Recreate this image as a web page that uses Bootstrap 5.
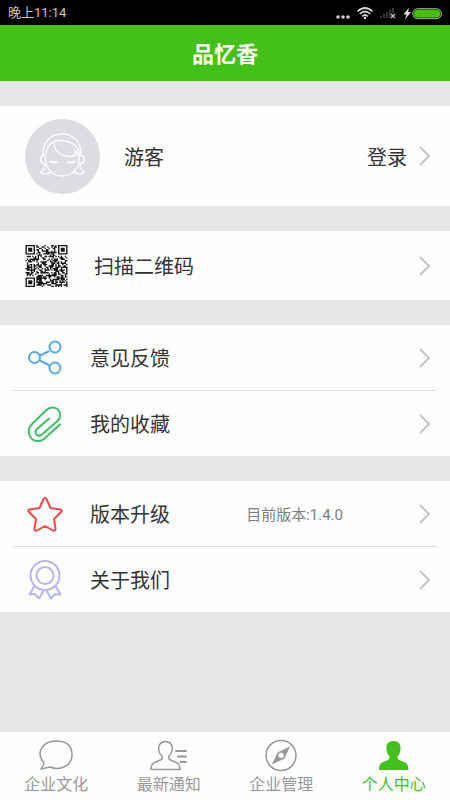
<!DOCTYPE html>
<html lang="zh-CN">
<head>
<meta charset="utf-8">
<meta name="viewport" content="width=device-width, initial-scale=1">
<title>品忆香</title>
<link href="https://cdn.jsdelivr.net/npm/bootstrap@5.3.0/dist/css/bootstrap.min.css" rel="stylesheet">
<style>
  body { font-family: Roboto, "Noto Sans CJK SC", sans-serif; background: #e7e6e8; color: #333; }
  svg { display: block; flex: none; }
  .status-bar { height: 25px; background: #000; color: #c8c8c8; font-size: 13px; line-height: 25px; }
  .title-bar { height: 56px; background: #44c01b; color: #fff; }
  .title-bar h1 { font-size: 22px; line-height: 32px; font-weight: 700; padding-top: 4px; }
  .groups { gap: 25px; padding: 25px 0; }
  .group { background: #fefefe; }
  .entry { height: 65px; padding: 0 18px 0 25px; font-size: 20px; line-height: 30px; color: #333; text-decoration: none; }
  .entry span { padding-top: 3px; }
  .entry-profile { height: 100px; }
  .entry-scan { height: 69px; }
  .entry .symbol { width: 40px; margin-right: 25px; }
  .entry .picture { margin-right: 26px; }
  .login { margin-right: 11px; }
  .divider { height: 1px; margin: 0 13px; background: #dedee0; }
  .version { font-size: 15px; color: #7d7d7d; margin-right: 75px; }
  .chevron { fill: none; stroke: #c3c3c6; stroke-width: 2; }
  .tab-bar { background: #fefefe; height: 68px; }
  .tab { color: #98989c; font-size: 16px; line-height: 26px; text-decoration: none; padding-top: 7px; }
  .tab.current { color: #44c01b; }
</style>
<script src="https://cdn.jsdelivr.net/npm/bootstrap@5.3.0/dist/js/bootstrap.bundle.min.js"></script>
</head>
<body>
<svg class="d-none" aria-hidden="true"><symbol id="chevron" viewBox="0 0 14 20"><path d="M2 1 11 10 2 19"/></symbol></svg>
<div class="d-flex flex-column min-vh-100">
  <div class="status-bar d-flex justify-content-between align-items-center px-2">
    <span>晚上11:14</span>
    <svg width="108" height="24" viewBox="0 0 108 24" aria-hidden="true">
      <g fill="#d0d0d0"><circle cx="4" cy="16" r="1.800"/><circle cx="9" cy="16" r="1.800"/><circle cx="14" cy="16" r="1.800"/></g>
      <g fill="none" stroke="#d4d4d4" stroke-width="1.700"><path d="M23.500 10.500Q31 3.500 38.500 10.500M25.800 13Q31 8 36.200 13M28.200 15.400Q31 12.600 33.800 15.400"/></g>
      <circle cx="31" cy="17" r="1.300" fill="#d4d4d4"/>
      <path d="M47 17v-2M50 17v-4M53 17v-6M56 17v-8M59 12V7" stroke="#383838" stroke-width="2"/>
      <path d="m57 13 4 4m0-4-4 4" stroke="#c8c8c8" stroke-width="1.200"/>
      <path d="m75 6.500-5.500 7h3L71 18.500l6-7.500h-3Z" fill="#ddd"/>
      <rect x="78.700" y="7.700" width="28.800" height="10" rx="5" fill="#174805" stroke="#a5b69c"/>
      <rect x="80" y="9" width="26.200" height="7.500" rx="3.700" fill="#48c010"/>
    </svg>
  </div>
  <header class="title-bar d-flex align-items-center justify-content-center"><h1 class="m-0">品忆香</h1></header>

  <main class="groups d-flex flex-column flex-grow-1">
    <section class="group">
      <a class="entry entry-profile d-flex align-items-center" href="#login">
        <svg class="symbol-face me-4" width="75" height="75" viewBox="0 0 75 75" aria-hidden="true">
          <circle cx="37.500" cy="37.500" r="37.500" fill="#dddce0"/>
          <g fill="none" stroke="#fafafb" stroke-width="1.500" stroke-linecap="round" stroke-linejoin="round">
            <path d="M18 37C17 23 26 15 37 15S57 23 56 37"/>
            <path d="M22 30C17 44 24 57 37.500 57S57 44 53 30"/>
            <path d="M22 30Q25 22 34 21.500Q47 21 53 30"/>
            <path d="M29 23Q29 34 39 36.500Q46 38.500 52 36Q49 34 50 31.500L54 35"/>
            <path d="M19 36Q15 37 16 42Q17 45 20 45Q20 51 15.500 53Q19 57 26 53M55 36Q60 37 59 42Q58 45 55 45Q55 51 59.500 53Q56 57 49 53"/>
            <path d="M25 42.500Q28 44 32 43M43 43Q47 44 50 42.500" stroke-width="2"/>
          </g>
        </svg>
        <span class="me-auto">游客</span>
        <span class="login">登录</span>
        <svg class="chevron" width="14" height="20"><use href="#chevron"/></svg>
      </a>
    </section>

    <section class="group">
      <a class="entry entry-scan d-flex align-items-center" href="#scan">
        <svg id="qr" class="picture" width="43" height="42" viewBox="0 0 31 31" aria-hidden="true"><path fill="#151515"/></svg>
        <span class="me-auto">扫描二维码</span>
        <svg class="chevron" width="14" height="20"><use href="#chevron"/></svg>
      </a>
    </section>

    <section class="group">
      <a class="entry d-flex align-items-center" href="#feedback">
        <svg class="symbol" width="40" height="40" viewBox="0 0 40 40" fill="none" stroke="#58aae8" stroke-width="2" aria-hidden="true">
          <path d="m15 17.500 9.500-4.500M15 22.500l9.500 5"/><circle cx="9.500" cy="19.500" r="5.500"/><circle cx="30" cy="9" r="5.500"/><circle cx="30" cy="30" r="5.500"/>
        </svg>
        <span class="me-auto">意见反馈</span>
        <svg class="chevron" width="14" height="20"><use href="#chevron"/></svg>
      </a>
      <div class="divider"></div>
      <a class="entry d-flex align-items-center" href="#favorites">
        <svg class="symbol" width="40" height="40" viewBox="0 0 40 40" fill="none" stroke="#3fbd69" stroke-width="2" stroke-linecap="round" stroke-linejoin="round" aria-hidden="true">
          <path d="M24 14.500 12.500 24.500C7.500 29 13 34 17.500 30L32.500 17C40 10 31 -1 22 5.500L7.500 19.500C0 27 5 37 13 37Q17 37 19 35L35 20.500"/>
        </svg>
        <span class="me-auto">我的收藏</span>
        <svg class="chevron" width="14" height="20"><use href="#chevron"/></svg>
      </a>
    </section>

    <section class="group">
      <a class="entry d-flex align-items-center" href="#upgrade">
        <svg class="symbol" width="40" height="40" viewBox="0 0 40 40" fill="none" stroke="#e84b4b" stroke-width="2" stroke-linejoin="round" aria-hidden="true">
          <path d="M18.500 5Q20 3 21.500 5L25.500 14 35 15.500Q38 16 36 18L29 25 30.500 34.500Q30.500 37.500 28 36.500L20 32 12 36.500Q9.500 37.500 9.500 34.500L11 25 4 18Q2 16 5 15.500L14.500 14Z"/>
        </svg>
        <span class="me-auto">版本升级</span>
        <span class="version">目前版本:1.4.0</span>
        <svg class="chevron" width="14" height="20"><use href="#chevron"/></svg>
      </a>
      <div class="divider"></div>
      <a class="entry d-flex align-items-center" href="#about">
        <svg class="symbol" width="40" height="40" viewBox="0 0 40 40" fill="none" stroke="#b9b6ee" stroke-width="2" stroke-linejoin="round" aria-hidden="true">
          <circle cx="20" cy="15.500" r="14.500"/><circle cx="20" cy="15.500" r="8.500"/>
          <path d="M9.500 26 4.500 34.500 10 34 14 38.500 18.500 30.500M30.500 26l5 8.500L30 34l-4 4.500-4.500-8"/>
        </svg>
        <span class="me-auto">关于我们</span>
        <svg class="chevron" width="14" height="20"><use href="#chevron"/></svg>
      </a>
    </section>
  </main>

  <nav class="tab-bar row g-0 text-center">
    <a class="tab col d-flex flex-column align-items-center" href="#culture">
      <svg width="40" height="33" viewBox="0 0 40 33" fill="none" stroke="currentColor" stroke-width="1.500" stroke-linejoin="round" aria-hidden="true"><path d="M8 24C-1 13 7 2 20 2S36 9 36 16C36 27 24 32 14 28L5 30Q7.500 27 8 24Z"/></svg>
      <span>企业文化</span>
    </a>
    <a class="tab col d-flex flex-column align-items-center" href="#news">
      <svg width="40" height="33" viewBox="0 0 40 33" fill="none" stroke="currentColor" stroke-width="1.500" stroke-linejoin="round" stroke-linecap="round" aria-hidden="true"><path d="M16.500 2.500C11 2.500 9 7 10 12Q10.500 15 13 17Q14 20 11.500 21L4.500 24Q2 26 2 30.500H31Q31 26 28.500 24L21.500 21Q19 20 20 17Q22.500 15 23 12C24 7 22 2.500 16.500 2.500Z"/><path d="M27 12h10M29 17.500h8M31.500 23H37" stroke-width="2"/></svg>
      <span>最新通知</span>
    </a>
    <a class="tab col d-flex flex-column align-items-center" href="#manage">
      <svg width="40" height="33" viewBox="0 0 40 33" aria-hidden="true"><circle cx="20" cy="16.500" r="15" fill="none" stroke="currentColor" stroke-width="1.500"/><path fill="currentColor" fill-rule="evenodd" d="M29 7.500 23.500 19.500 11 25.500 16.500 13.500ZM20 13.800a2.700 2.700 0 1 0 .01 0Z"/></svg>
      <span>企业管理</span>
    </a>
    <a class="tab current col d-flex flex-column align-items-center" href="#me" aria-current="page">
      <svg width="40" height="33" viewBox="0 0 40 33" fill="currentColor" aria-hidden="true"><path d="M19.500 2C13.500 2 12 6 12.500 11Q13 15 15.500 17.500Q16 20.500 13 21.500L8 23.500Q5 25 5 31H34.500Q34.500 25 31 23.500L26 21.500Q23 20.500 23.500 17.500Q26 15 26.500 11C27 6 25.500 2 19.500 2Z"/></svg>
      <span>个人中心</span>
    </a>
  </nav>
</div>
<script>
  // Builds the code thumbnail: three corner finders and scattered modules.
  const size = 31, last = size - 7;
  let seed = 77, d = "";
  for (let y = 0; y < size; y++) for (let x = 0; x < size; x++) {
    seed = (seed * 16807) % 2147483647;
    let on = seed / 2147483647 < 0.52;
    for (const [cx, cy] of [[0, 0], [last, 0], [0, last]]) {
      const r = Math.max(Math.abs(x - cx - 3), Math.abs(y - cy - 3));
      if (r <= 4) on = r === 3 || r <= 1;
    }
    if (on) d += `M${x} ${y}h1v1h-1z`;
  }
  document.querySelector("#qr path").setAttribute("d", d);
</script>
</body>
</html>
